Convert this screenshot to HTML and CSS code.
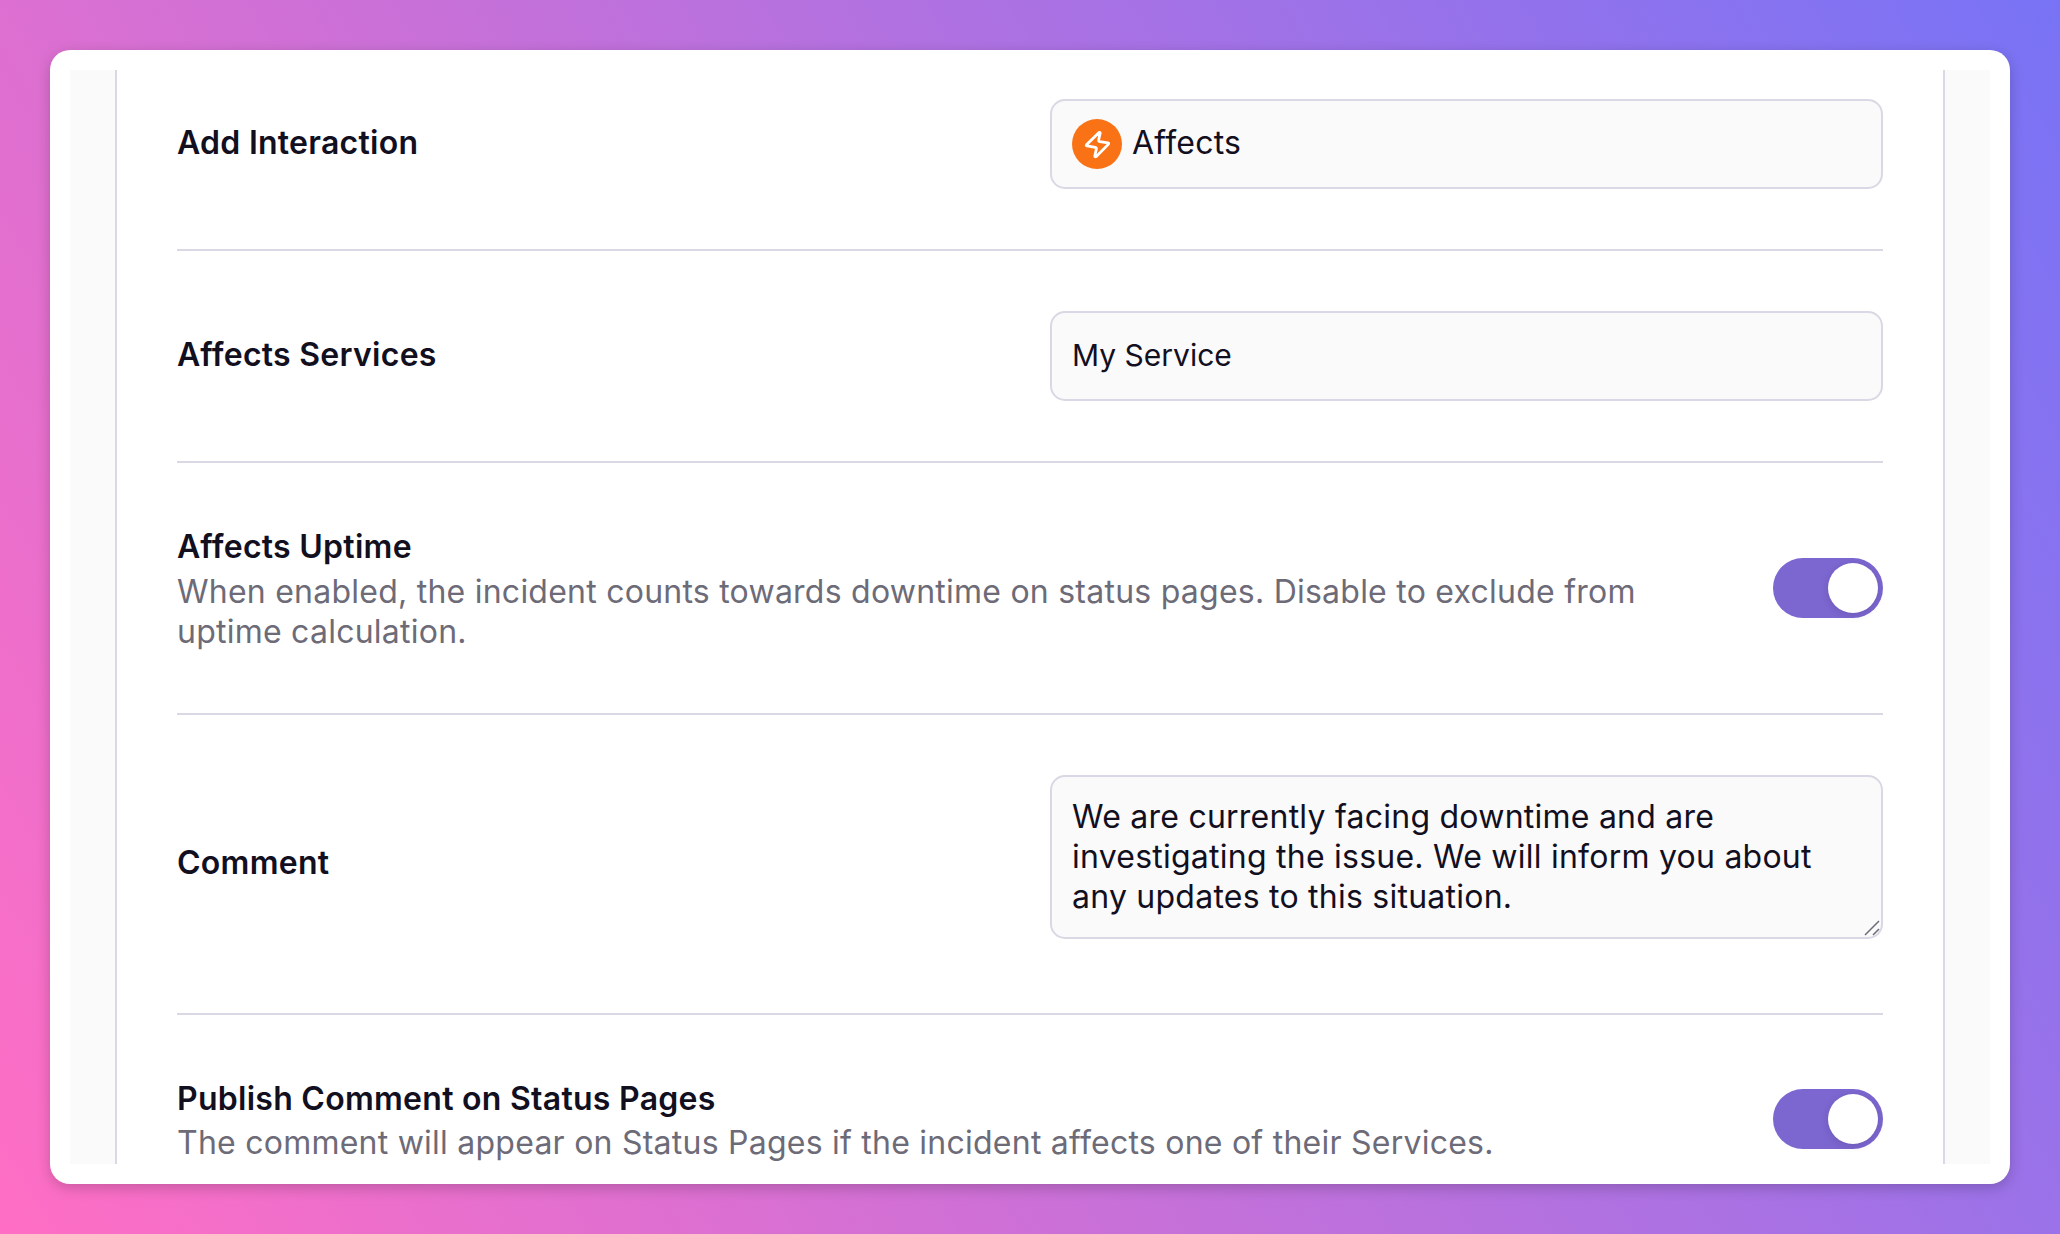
FILE: index.html
```html
<!DOCTYPE html>
<html lang="en">
<head>
    <meta charset="UTF-8">
    <meta name="viewport" content="width=device-width, initial-scale=1.0">
    <title>Incident Template</title>
    <link rel="stylesheet" href="styles.css">
</head>
<body>
    <div class="window">
        <div class="page">
            <main class="panel">
                <div class="row">
                    <div class="label">Add Interaction</div>
                    <div class="field">
                        <span class="badge">
                            <svg width="27" height="29" viewBox="0 0 28 30" fill="none" stroke="#fff" stroke-width="2.9" stroke-linecap="round" stroke-linejoin="round">
                                <path d="M15.6 2.6 2.6 15.2q-.7 1.1.7 1.3l8.3 1.4q1.6.4 1.2 1.9l-1.6 7.2q.2 1.3 1.3.6L25.4 14.6q.7-1.1-.7-1.4l-8.3-1.2q-1.6-.4-1.2-1.9l1.6-6.8q-.1-1.3-1.2-.7z"/>
                            </svg>
                        </span>
                        <span class="value">Affects</span>
                    </div>
                </div>

                <div class="row">
                    <div class="label">Affects Services</div>
                    <div class="field field-small"><span class="value">My Service</span></div>
                </div>

                <div class="row">
                    <div class="info info-tall">
                        <div class="title">Affects Uptime</div>
                        <p class="hint">When enabled, the incident counts towards downtime on status pages. Disable to exclude from uptime calculation.</p>
                    </div>
                    <div class="toggle"><span class="knob"></span></div>
                </div>

                <div class="row">
                    <div class="label">Comment</div>
                    <div class="field comment">
                        We are currently facing downtime and are investigating the issue. We will inform you about any updates to this situation.
                        <svg class="grip" width="16" height="16" viewBox="0 0 16 16" stroke="#6d6b78" stroke-width="1.5">
                            <path d="M1 15 15 1M9 15l6-6"/>
                        </svg>
                    </div>
                </div>

                <div class="row">
                    <div class="info">
                        <div class="title">Publish Comment on Status Pages</div>
                        <p class="hint">The comment will appear on Status Pages if the incident affects one of their Services.</p>
                    </div>
                    <div class="toggle"><span class="knob"></span></div>
                </div>
            </main>
        </div>
    </div>
</body>
</html>
```

FILE: styles.css
```css
* {
    box-sizing: border-box;
}
body {
    margin: 0;
    height: 1234px;
    padding: 50px;
    overflow: hidden;
    background: linear-gradient(60deg, #ff6ec4, #7873f5);
    font-family: Inter, sans-serif;
    font-size: 32px;
    line-height: 40px;
    letter-spacing: 0.24px;
    color: #120f1f;
}
.window {
    height: 1134px;
    padding: 20px;
    background: #fff;
    border-radius: 20px;
    box-shadow: 0 4px 14px rgba(0, 0, 0, 0.2);
}
.page {
    height: 1094px;
    padding: 0 45px;
    overflow: hidden;
    background: #fafafa;
}
.panel {
    padding: 0 60px;
    background: #fff;
    border: solid #dad8e4;
    border-width: 0 2px;
}
.row {
    display: flex;
    align-items: center;
    justify-content: space-between;
    padding: 60px 0;
    border-bottom: 2px solid #dad8e4;
}
.row:first-child {
    padding-top: 29px;
}
.row:last-child {
    border-bottom: 0;
}
.label, .title {
    font-weight: 600;
    letter-spacing: 0.27px;
}
.label, .value {
    padding-bottom: 2px;
}
.field {
    display: flex;
    align-items: center;
    gap: 10px;
    width: 833px;
    height: 90px;
    padding: 0 20px;
    background: #fafafa;
    border: 2px solid #dad8e4;
    border-radius: 15px;
}
.field-small {
    font-size: 30px;
    letter-spacing: 0;
}
.comment {
    display: block;
    position: relative;
    height: 164px;
    margin-bottom: 14px;
    padding-top: 20px;
}
.grip {
    position: absolute;
    right: 1px;
    bottom: 1px;
}
.badge {
    display: flex;
    align-items: center;
    justify-content: center;
    width: 50px;
    height: 50px;
    background: #f97316;
    border-radius: 50%;
}
.info {
    width: 1500px;
    height: 88px;
}
.info-tall {
    height: 130px;
}
.title {
    line-height: 48px;
}
.hint {
    margin: 0;
    color: #6d6b78;
}
.info-tall .hint {
    padding-top: 1px;
}
.toggle {
    display: flex;
    justify-content: flex-end;
    width: 110px;
    height: 60px;
    padding: 5px;
    background: #7c66d0;
    border-radius: 30px;
}
.knob {
    width: 50px;
    height: 50px;
    background: #fff;
    border-radius: 50%;
    box-shadow: 0 2px 8px rgba(0, 0, 0, 0.12);
}
```
